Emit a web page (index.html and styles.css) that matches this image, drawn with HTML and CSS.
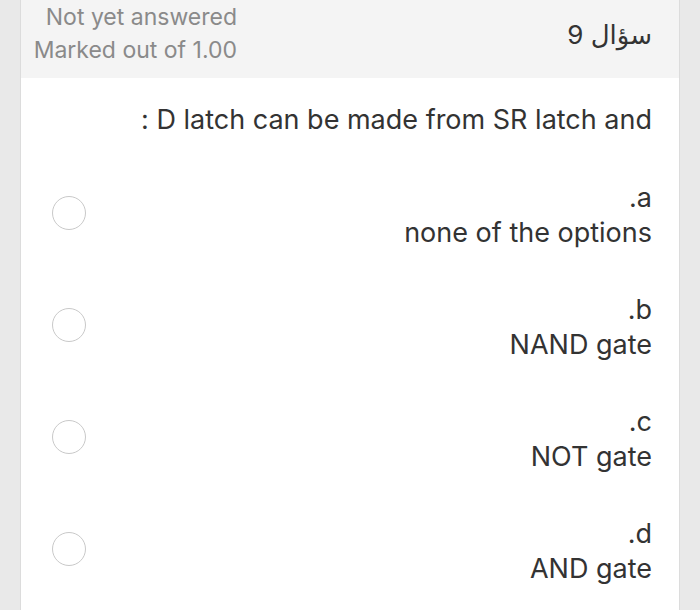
FILE: index.html
```html
<!DOCTYPE html>
<html lang="ar" dir="rtl">
<head>
<meta charset="utf-8">
<title>سؤال 9</title>
<link rel="stylesheet" href="styles.css">
</head>
<body>
<div class="card">
  <div class="header">
    <h3 class="qno">سؤال 9</h3>
    <div class="info">
      <div class="state">Not yet answered</div>
      <div class="grade">Marked out of 1.00</div>
    </div>
  </div>
  <div class="content">
    <div class="qtext">D latch can be made from SR latch and :</div>
    <div class="answers">
      <label class="option">
        <span class="label"><span class="letter">a.</span><span class="text">none of the options</span></span>
        <span class="radio"></span>
      </label>
      <label class="option">
        <span class="label"><span class="letter">b.</span><span class="text">NAND gate</span></span>
        <span class="radio"></span>
      </label>
      <label class="option">
        <span class="label"><span class="letter">c.</span><span class="text">NOT gate</span></span>
        <span class="radio"></span>
      </label>
      <label class="option">
        <span class="label"><span class="letter">d.</span><span class="text">AND gate</span></span>
        <span class="radio"></span>
      </label>
    </div>
  </div>
</div>
</body>
</html>
```
FILE: styles.css
```css
html, body {
  margin: 0;
  padding: 0;
}
body {
  background: #e9e9e9;
  font-family: Inter, "DejaVu Sans", sans-serif;
  color: #333333;
  height: 610px;
  overflow: hidden;
}
.card {
  margin: 0 20px;
  background: #ffffff;
  border-left: 1px solid #dcdcdc;
  border-right: 1px solid #dcdcdc;
  height: 610px;
  box-sizing: border-box;
}
.header {
  background: #f4f4f4;
  height: 78px;
  display: flex;
  justify-content: space-between;
  align-items: flex-start;
}
.qno {
  margin: 0;
  padding-top: 18px;
  padding-right: 27px;
  font-size: 26px;
  font-weight: normal;
  line-height: 34px;
  color: #333333;
}
.info {
  width: 216px;
  text-align: right;
  font-size: 23px;
  line-height: 33px;
  color: #8a8a8a;
  margin-top: 1px;
}
.content {
  padding: 25px 27px 0 31px;
}
.qtext {
  font-size: 27px;
  line-height: 34px;
}
.answers {
  margin-top: 21px;
}
.option {
  display: flex;
  justify-content: space-between;
  align-items: center;
  height: 112px;
}
.label {
  display: flex;
  flex-direction: column;
  align-items: flex-start;
  font-size: 27px;
  line-height: 35px;
  margin-top: 2px;
}
.radio {
  width: 32px;
  height: 32px;
  border: 1.5px solid #c9c9c9;
  border-radius: 50%;
  margin-top: -2px;
}
```
